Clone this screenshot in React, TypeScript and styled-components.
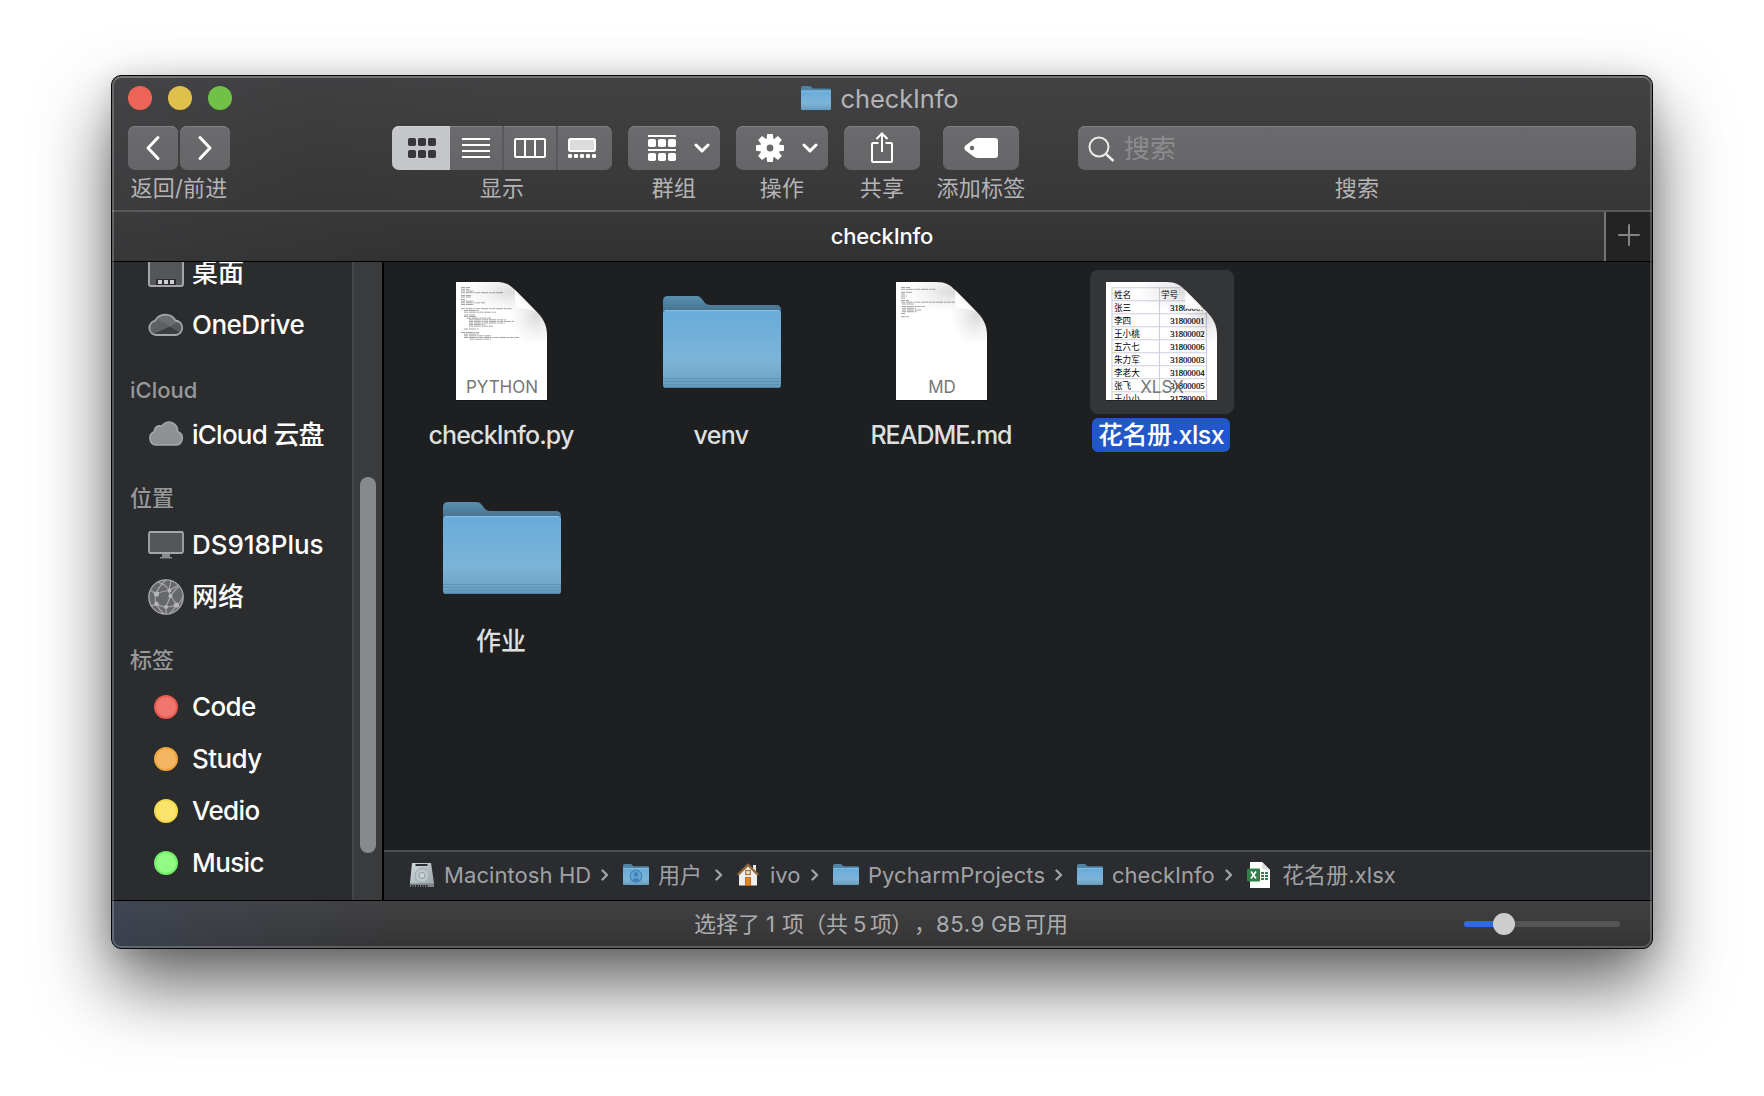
import React from "react";
import styled, { createGlobalStyle } from "styled-components";

const Global = createGlobalStyle`
  * { box-sizing: border-box; }
  body {
    margin: 0;
    background: #fff;
    font-family: Inter, "Noto Sans CJK SC", sans-serif;
    overflow: hidden;
  }
  svg { display: block; flex: none; }
`;

const Desktop = styled.div`
  width: 1764px;
  height: 1096px;
  padding: 75px 111px;
`;

const Window = styled.div`
  position: relative;
  display: flex;
  flex-direction: column;
  width: 1542px;
  height: 874px;
  border: 1px solid #060606;
  border-radius: 10px;
  overflow: hidden;
  background: #1e1f21;
  &::after {
    content: "";
    position: absolute;
    inset: 0;
    border: 2px solid rgba(255, 255, 255, 0.2);
    border-top-color: rgba(255, 255, 255, 0.28);
    border-radius: 9px;
    pointer-events: none;
  }
`;

const Shadow = styled.div`
  width: 1542px;
  height: 874px;
  border-radius: 10px;
  box-shadow: 0 36px 72px rgba(0, 0, 0, 0.61), 0 4px 26px rgba(0, 0, 0, 0.13);
`;

const Header = styled.header`
  height: 136px;
  border-bottom: 2px solid #59595b;
  background:
    linear-gradient(90deg, rgba(70, 72, 74, 0.3), rgba(40, 42, 44, 0.08) 200px, rgba(0, 0, 0, 0) 420px),
    linear-gradient(#424244, #373738);
`;

const TitleRow = styled.div`
  display: flex;
  align-items: center;
  justify-content: center;
  gap: 9px;
  height: 50px;
  padding: 0 4px 6px 0;
`;

const Fit = styled.span<{ $size: number; $ls?: number; $weight?: number; $color?: string }>`
  font-size: ${(p) => p.$size}px;
  letter-spacing: ${(p) => p.$ls ?? 0}px;
  font-weight: ${(p) => p.$weight ?? 400};
  color: ${(p) => p.$color ?? "inherit"};
  line-height: 1.2;
  white-space: nowrap;
`;

const TitleText = styled(Fit)`
  padding-top: 2px;
`;

const Lights = styled.div`
  position: absolute;
  left: 16px;
  top: 10px;
  display: flex;
  gap: 16px;
`;

const Light = styled.i<{ $c: string }>`
  width: 24px;
  height: 24px;
  border-radius: 50%;
  background: ${(p) => p.$c};
`;

const Toolbar = styled.div`
  display: flex;
  padding-left: 16px;
`;

const Tool = styled.div<{ $w: number; $ml?: number }>`
  display: flex;
  flex-direction: column;
  align-items: center;
  width: ${(p) => p.$w}px;
  margin-left: ${(p) => p.$ml ?? 16}px;
`;

const ToolLabel = styled.span`
  height: 36px;
  line-height: 36px;
  font-size: 22px;
  letter-spacing: 0.2px;
  color: #b4b4b6;
  white-space: nowrap;
`;

const Group = styled.div<{ $gap?: number }>`
  display: flex;
  gap: ${(p) => p.$gap ?? 0}px;
  width: 100%;
`;

const Button = styled.div<{ $r?: string; $on?: boolean; $w?: number; $sep?: boolean; $pad?: string }>`
  display: flex;
  align-items: center;
  justify-content: center;
  flex: ${(p) => (p.$w ? "none" : "1")};
  width: ${(p) => (p.$w ? p.$w + "px" : "auto")};
  height: 44px;
  padding: ${(p) => p.$pad ?? "0"};
  border-radius: ${(p) => p.$r ?? "7px"};
  background: ${(p) => (p.$on ? "#c5c6c8" : "linear-gradient(#6b6b6d, #656567)")};
  box-shadow: inset 0 1px 0 ${(p) => (p.$on ? "#d2d2d4" : "#828284")};
  border-right: ${(p) => (p.$sep ? "2px solid #59595b" : "0")};
`;

const MenuButton = styled(Button)`
  justify-content: space-between;
  padding: 0 10px 0 20px;
`;

const Search = styled(Button)`
  justify-content: flex-start;
  padding: 1px 0 0 9px;
  gap: 9px;
`;

const TabBar = styled.div`
  display: flex;
  height: 50px;
  border-bottom: 1px solid #000;
  background: linear-gradient(90deg, rgba(66, 68, 70, 0.3), transparent 300px), linear-gradient(#373738, #323233);
`;

const Tab = styled.div`
  flex: 1;
  display: flex;
  align-items: center;
  justify-content: center;
  padding: 0 0 1px 48px;
`;

const AddTab = styled.div`
  display: flex;
  align-items: center;
  width: 48px;
  padding: 0 0 3px 12px;
  border-left: 2px solid #757577;
  background: #232324;
`;

const Body = styled.div`
  display: flex;
  height: 638px;
`;

const Sidebar = styled.nav`
  width: 240px;
  height: 638px;
  overflow: hidden;
  background: #2b2c2e;
`;

const SideList = styled.div`
  margin-top: -15px;
`;

const SideHead = styled.div<{ $top?: number }>`
  height: 58px;
  padding: ${(p) => p.$top ?? 20}px 0 0 18px;
  line-height: 34px;
  font-size: 22px;
  font-weight: 500;
  color: #97989a;
`;

const SideRow = styled.div`
  display: flex;
  align-items: center;
  height: 52px;
  padding-left: 36px;
  gap: 8px;
  color: #fff;
`;

const IconSlot = styled.div<{ $lift?: number }>`
  display: flex;
  align-items: center;
  justify-content: center;
  width: 36px;
  padding-bottom: ${(p) => p.$lift ?? 0}px;
`;

const TagDot = styled.i<{ $fill: string; $ring: string }>`
  width: 24px;
  height: 24px;
  border-radius: 50%;
  background: ${(p) => p.$fill};
  border: 2px solid ${(p) => p.$ring};
`;

const ScrollTrack = styled.div`
  width: 32px;
  height: 638px;
  padding: 215px 0 0 6px;
  border-left: 2px solid #454648;
  border-right: 2px solid #000;
  background: #3a3b3d;
`;

const ScrollThumb = styled.div`
  width: 16px;
  height: 376px;
  border-radius: 8px;
  background: #88898b;
`;

const Main = styled.main`
  flex: 1;
  display: flex;
  flex-direction: column;
`;

const Files = styled.div`
  flex: 1;
  display: grid;
  grid-template-columns: repeat(4, 220px);
  grid-auto-rows: 206px;
  padding: 8px 0 0 8px;
`;

const File = styled.div`
  display: flex;
  flex-direction: column;
  align-items: center;
  gap: 4px;
  color: #dedfdf;
`;

const Thumb = styled.div<{ $on?: boolean; $folder?: boolean }>`
  display: flex;
  align-items: center;
  justify-content: center;
  width: 144px;
  height: 144px;
  border-radius: 8px;
  background: ${(p) => (p.$on ? "#343537" : "transparent")};
  padding: ${(p) => (p.$folder ? "0" : "0 1px 2px 0")};
`;

const Name = styled.div<{ $on?: boolean }>`
  display: flex;
  align-items: center;
  height: 34px;
  padding: 0 6px;
  margin-right: 2px;
  border-radius: 6px;
  background: ${(p) => (p.$on ? "#2157c9" : "transparent")};
  color: ${(p) => (p.$on ? "#fff" : "inherit")};
`;

const PathBar = styled.div`
  display: flex;
  align-items: center;
  height: 50px;
  padding: 0 0 2px 25px;
  border-top: 2px solid #4a4b4d;
  background: #2b2c30;
  color: #a1a2a4;
`;

const Crumb = styled.div<{ $w: number; $gap: number }>`
  display: flex;
  align-items: center;
  gap: ${(p) => p.$gap}px;
  width: ${(p) => p.$w}px;
`;

const CrumbArrow = styled.div`
  flex: 1;
  display: flex;
  justify-content: flex-end;
  padding-right: 14px;
`;

const StatusBar = styled.footer`
  display: flex;
  align-items: center;
  height: 48px;
  border-top: 1px solid #000;
  padding: 0 32px 2px 582px;
  justify-content: space-between;
  background:
    linear-gradient(90deg, rgba(62, 74, 96, 0.55), rgba(66, 74, 90, 0.35) 90px, rgba(66, 68, 74, 0) 290px),
    linear-gradient(#414143, #343435);
  color: #abacae;
`;

const StatusText = styled.div`
  display: flex;
  font-size: 22px;
  line-height: 30px;
  white-space: pre;
`;

const Piece = styled.span<{ $w: number; $ls?: number }>`
  width: ${(p) => p.$w}px;
  letter-spacing: ${(p) => p.$ls ?? 0}px;
`;

const Track = styled.div`
  display: flex;
  align-items: center;
  width: 156px;
  height: 6px;
  border-radius: 3px;
  background: #555557;
`;

const TrackFill = styled.div`
  width: 32px;
  height: 6px;
  border-radius: 3px 0 0 3px;
  background: #2f6ae0;
`;

const Knob = styled.div`
  width: 22px;
  height: 22px;
  margin-left: -3px;
  border-radius: 50%;
  background: #cdcdcd;
`;

const Line = ({ d, w, h, sw = 3, color = "#fff" }: { d: string; w: number; h: number; sw?: number; color?: string }) => (
  <svg width={w} height={h} viewBox={`0 0 ${w} ${h}`} fill="none" stroke={color} strokeWidth={sw} strokeLinecap="round" strokeLinejoin="round">
    <path d={d} />
  </svg>
);

const Chevron = () => <Line w={16} h={10} d="M2 2L8 8L14 2" />;

const Defs = styled.svg`
  position: absolute;
`;

const SharedPaints = () => (
  <Defs width="0" height="0">
    <defs>
      <linearGradient id="front" x1="0" y1="0" x2="0" y2="1">
        <stop offset="0" stopColor="#68abd9" />
        <stop offset="0.65" stopColor="#7cb4d8" />
        <stop offset="0.84" stopColor="#73a8ca" />
        <stop offset="1" stopColor="#659bbd" />
      </linearGradient>
      <linearGradient id="back" x1="0" y1="0" x2="0" y2="1">
        <stop offset="0" stopColor="#5a8fb0" />
        <stop offset="0.5" stopColor="#47738f" />
      </linearGradient>
      <linearGradient id="fold" x1="0" y1="1" x2="0.7" y2="0.3">
        <stop offset="0" stopColor="#fff" />
        <stop offset="0.6" stopColor="#fbfbfb" />
        <stop offset="1" stopColor="#dcdcdc" />
      </linearGradient>
      <radialGradient id="curl" cx="0.5" cy="0.5" r="0.5">
        <stop offset="0" stopColor="#000" stopOpacity="0.2" />
        <stop offset="0.5" stopColor="#000" stopOpacity="0.08" />
        <stop offset="1" stopColor="#000" stopOpacity="0" />
      </radialGradient>
      <linearGradient id="metal" x1="0" y1="0" x2="1" y2="1">
        <stop offset="0" stopColor="#d2dadd" />
        <stop offset="1" stopColor="#98a2a6" />
      </linearGradient>
    </defs>
  </Defs>
);

const BigFolder = () => (
  <svg width="118" height="94" viewBox="0 0 118 94">
    <path d="M0 6Q0 1 5 1H34Q37 1 39 4L42 8Q44 10 47 10H113Q118 10 118 15V30H0Z" fill="url(#back)" />
    <path d="M0 18Q0 15 4 15H114Q118 15 118 18V90Q118 93 115 93H3Q0 93 0 90Z" fill="url(#front)" />
    <path d="M2 15.7H116" stroke="#8cc4e8" strokeWidth="1" />
    <path d="M0 83.5H118M0 86.5H118M0 89.5H118" stroke="#4f86a8" strokeOpacity="0.55" strokeWidth="1" />
    <path d="M1 92.4H117" stroke="#4b7f9f" strokeWidth="1" />
  </svg>
);

const SmallFolder = ({ w = 26, h = 21, user }: { w?: number; h?: number; user?: boolean }) => (
  <svg width={w} height={h} viewBox="0 0 30 24" preserveAspectRatio="none">
    <path d="M0 2Q0 0 2 0H8.5Q10 0 11 1.5L12 2.5H28.5Q30 2.5 30 4V8H0Z" fill="#4f84a5" />
    <path d="M0 5Q0 4.5 1 4.5H29Q30 4.5 30 5V22.5Q30 24 29 24H1Q0 24 0 22.5Z" fill="url(#front)" />
    <path d="M0 5H30" stroke="#8cc4e8" strokeWidth="0.8" />
    {user && (
      <g>
        <circle cx="15" cy="14" r="6.8" fill="#62a4d2" stroke="#4080b4" strokeWidth="1.2" />
        <circle cx="15" cy="12" r="2.5" fill="#4080b4" />
        <path d="M10.5 18.5Q15 13.5 19.5 18.5Q15 22 10.5 18.5Z" fill="#4080b4" />
      </g>
    )}
  </svg>
);

type Mark = [number, number, number];
const pyMarks: Mark[] = [
  [5, 5.5, 9], [5, 7.3, 8], [5, 9, 13], [5, 10.7, 42], [5, 13.5, 10], [5, 15, 10], [5, 17.5, 4], [5, 19.2, 13], [5, 20.8, 24], [5, 22.5, 13],
  [5, 26.7, 51], [8, 28.5, 15], [8, 30.2, 32], [8, 33, 11], [8, 34.6, 12], [11, 36.2, 24], [13, 37.8, 37], [13, 39.4, 45], [13, 41, 36], [13, 42.6, 16], [13, 44.2, 24],
  [8, 47, 15], [5, 50.5, 18], [8, 52.1, 15], [8, 53.8, 27], [8, 55.5, 55], [14, 57.2, 21],
];
const mdMarks: Mark[] = [
  [5, 5.5, 9], [5, 7.3, 35], [5, 10.3, 11], [5, 12, 5], [5, 14, 6], [5, 16, 5], [5, 18.5, 8], [5, 20.2, 54], [6, 22, 12], [6, 24.5, 23],
  [6, 26.3, 14], [6, 28, 20], [6, 29.7, 15], [5, 31.5, 4], [5, 34.7, 8],
];
const roster: [string, string][] = [
  ["张三", "31800000"], ["李四", "31800001"], ["王小桃", "31800002"], ["五六七", "31800006"], ["朱力军", "31800003"],
  ["李老大", "31800004"], ["张飞", "31800005"], ["王小小", "31780000"],
];

const Doc = ({ w, id, label, marks }: { w: number; id: string; label: string; marks?: Mark[] }) => {
  const r = w - 91;
  return (
    <svg width={w} height="118" viewBox={`0 0 ${w} 118`} overflow="visible">
      <defs>
        <clipPath id={id}>
          <path d={`M0 0H${r + 40}C${r + 50} 0 ${r + 54} 3 ${r + 60} 9L${r + 78} 27C${r + 87} 36 ${w} 42 ${w} 54V118H0Z`} />
        </clipPath>
      </defs>
      <rect x="0" y="117" width={w} height="2" fill="#000" opacity="0.35" />
      <g clipPath={`url(#${id})`}>
        <rect width={w} height="118" fill="#fff" />
        {marks && (
          <g stroke="#9a9a9a" strokeWidth="0.9" strokeDasharray="4 0.8 7 0.8 2 0.6">
            {marks.map(([x, y, len], i) => <path key={i} d={`M${x} ${y}h${len}`} />)}
          </g>
        )}
        {!marks && (
          <g>
            <g stroke="#cfcfe0" strokeWidth="1.1" fill="none">
              {[...Array(9)].map((_, i) => <path key={i} d={`M5.5 ${5.7 + i * 13}H100.5`} />)}
              <path d="M6 5.5V118M53.5 5.5V118M100.5 5.5V118" />
            </g>
            <g fontFamily='"Liberation Serif", "Noto Sans CJK SC", serif' fontSize="8.6" fill="#000">
              <text x="8" y="16">姓名</text>
              <text x="55" y="16">学号</text>
              {roster.map(([n, no], i) => (
                <g key={no}>
                  <text x="8" y={29 + i * 13}>{n}</text>
                  <text x="98.5" y={29 + i * 13} textAnchor="end" stroke="#000" strokeWidth="0.2">{no}</text>
                </g>
              ))}
            </g>
          </g>
        )}
        <ellipse cx={r + 56} cy="10" rx="46" ry="20" fill="url(#curl)" opacity="0.7" />
        <ellipse cx={r + 80} cy="34" rx="26" ry="30" fill="url(#curl)" opacity="0.7" />
        <path d={`M${r + 59} 6V24Q${r + 59} 27 ${r + 62} 27Q${r + 72} 26 ${r + 80} 30Z`} fill="url(#fold)" />
      </g>
      <text x={w / 2 + 0.5} y="111" textAnchor="middle" fontFamily="Inter, sans-serif" fontSize="17" fontWeight="400" fill="#777">{label}</text>
    </svg>
  );
};

const Desk = () => (
  <svg width="36" height="28" viewBox="0 0 36 28">
    <rect x="1" y="1" width="34" height="26" rx="2" fill="#555658" stroke="#a5a6a8" strokeWidth="2" />
    <rect x="8" y="20" width="20" height="6" fill="#2b2c2e" />
    <path d="M10 21h4v4h-4zM16 21h4v4h-4zM22 21h4v4h-4z" fill="#cfcfd1" />
  </svg>
);
const OneDrive = () => (
  <svg width="36" height="24" viewBox="0 0 36 24">
    <defs>
      <clipPath id="od"><path d="M8 23A7.2 7.2 0 0 1 7 8.800A11.800 11.800 0 0 1 27.500 8.500A7.300 7.300 0 0 1 28 23Z" /></clipPath>
    </defs>
    <g clipPath="url(#od)">
      <rect width="36" height="24" fill="#6c6d6f" />
      <path d="M0 8L9 7L22 14.500L4 23L0 24Z" fill="#5f6062" />
      <path d="M5 22L22 14.500L36 22V24H5Z" fill="#3c3d3f" />
      <path d="M22 14.500L28 11L36 10V22L32 21Z" fill="#56575a" />
    </g>
    <path d="M8 23A7.2 7.2 0 0 1 7 8.800A11.800 11.800 0 0 1 27.500 8.500A7.300 7.300 0 0 1 28 23Z" fill="none" stroke="#a5a6a8" strokeWidth="1.800" />
  </svg>
);
const ICloud = () => (
  <svg width="36" height="25" viewBox="0 0 36 25">
    <path d="M8 24A7 7 0 0 1 6.500 10.500A4.800 4.800 0 0 1 13.500 5.500A8.600 8.600 0 0 1 29.600 10.500A7 7 0 0 1 28.500 24Z" fill="#8f9092" stroke="#a5a6a8" strokeWidth="1.600" />
  </svg>
);
const Monitor = () => (
  <svg width="36" height="28" viewBox="0 0 36 28">
    <rect x="1" y="1" width="34" height="21" rx="1.500" fill="#555658" stroke="#a5a6a8" strokeWidth="1.800" />
    <path d="M14 23h8v3h2v1.600H12V26h2z" fill="#88898b" />
  </svg>
);
const Globe = () => (
  <svg width="36" height="36" viewBox="0 0 36 36" fill="none" stroke="#a9aaac" strokeWidth="1.100">
    <circle cx="18" cy="18" r="17.200" fill="#67686a" strokeWidth="1.300" />
    <path d="M8 15Q14 12 21 11.500Q27 8 31 6M8 15Q6 20 8.500 25Q13 27.500 18 28Q24 28 28.500 26Q26 21 22.500 17Q21 14 21 11.500Q18 5 10 3.500M8 15Q11 7 18 1M22.500 17Q27 10 31 8M22.500 17Q20 23 18 28V35M8 15L2 11M8.500 25L3 27M8.500 25Q11 31 16 35M28.500 26Q34 22 35 17M28.500 26Q26 31 22 34M21 11.500L23 1.500" />
    <g fill="#b5b6b8" stroke="none">
      <circle cx="8.500" cy="15" r="2.600" /><circle cx="21.500" cy="11.500" r="1.900" /><circle cx="22.500" cy="17" r="2.100" />
      <circle cx="8.500" cy="25" r="2.300" /><circle cx="18" cy="28" r="2" /><circle cx="28.500" cy="26" r="2.600" />
    </g>
  </svg>
);

const Gear = () => (
  <svg width="28" height="28" viewBox="-14 -14 28 28" fill="#fff">
    {[0, 45, 90, 135].map((a) => <path key={a} transform={`rotate(${a})`} d="M-2.800 -14H2.800L3.600 -8V8L2.800 14H-2.800L-3.600 8V-8Z" />)}
    <circle r="9.800" />
    <circle r="3.400" fill="#68686a" />
  </svg>
);

const squares = (y: number) => [0, 10, 20].map((x) => <rect key={x + "-" + y} x={x} y={y} width="8" height="8" rx="1.800" />);

const Drive = () => (
  <svg width="26" height="26" viewBox="0 0 26 26">
    <path d="M3 1H22L25 21V25H1V21Z" fill="url(#metal)" />
    <path d="M1 21.500H25V25H1Z" fill="#7c8487" />
    <path d="M2 24H19" stroke="#222" strokeWidth="2" strokeDasharray="1.500 1" />
    <rect x="6.500" y="2" width="12" height="2" fill="#2c3032" />
    <circle cx="13" cy="13.500" r="7" fill="#bdc6ca" stroke="#a0aaae" />
    <circle cx="13" cy="13.500" r="3" fill="#cdd5d8" stroke="#8f999e" />
  </svg>
);
const House = () => (
  <svg width="22" height="23" viewBox="0 0 22 23">
    <rect x="16" y="2" width="3" height="6" fill="#e8e8e8" />
    <path d="M2 11L11 3L20 11V22.500H2Z" fill="#eeeeec" />
    <path d="M0.800 11.800L11 2L21.200 11.800" fill="none" stroke="#94673a" strokeWidth="2.400" />
    <rect x="8.700" y="7.500" width="4.600" height="4" fill="#f3e3d2" stroke="#a9713c" strokeWidth="1.200" />
    <rect x="8.500" y="14.500" width="5" height="8" fill="#e0862a" stroke="#a85d18" strokeWidth="0.800" />
  </svg>
);
const Excel = () => (
  <svg width="24" height="26" viewBox="0 0 24 26">
    <path d="M3 0H15L23 8V26H3Z" fill="#fff" />
    <path d="M15 0V6Q16 8 23 8Z" fill="#dedede" />
    <path d="M14 10h3v2h-3zM18 10h3v2h-3zM14 13h3v2h-3zM18 13h3v2h-3zM14 16h3v2h-3zM18 16h3v2h-3z" fill="#2f8350" />
    <rect x="0" y="6.500" width="13" height="13" rx="1" fill="#2f8049" />
    <path d="M4 9.500L9 16.500M9 9.500L4 16.500" stroke="#fff" strokeWidth="1.700" />
  </svg>
);

const side = {
  top: [
    { icon: <Desk />, label: "桌面", ls: 0, lift: 0 },
    { icon: <OneDrive />, label: "OneDrive", ls: -0.5, lift: 3 },
  ],
  places: [
    { icon: <Monitor />, label: "DS918Plus", ls: -0.05, lift: 1 },
    { icon: <Globe />, label: "网络", ls: 0, lift: 1 },
  ],
  tags: [
    { label: "Code", fill: "#f0776f", ring: "#ea5a50" },
    { label: "Study", fill: "#f3b764", ring: "#f0a63c" },
    { label: "Vedio", fill: "#fbe46e", ring: "#f2da4c" },
    { label: "Music", fill: "#92fb84", ring: "#70ef68" },
  ],
};

const files = [
  { name: "checkInfo.py", ls: -0.85, art: <Doc w={91} id="py" label="PYTHON" marks={pyMarks} /> },
  { name: "venv", ls: -0.7, folder: true, art: <BigFolder /> },
  { name: "README.md", ls: -1, art: <Doc w={91} id="md" label="MD" marks={mdMarks} /> },
  { name: "花名册.xlsx", ls: -0.5, on: true, art: <Doc w={111} id="xl" label="XLSX" /> },
  { name: "作业", ls: 0, folder: true, art: <BigFolder /> },
];

const crumbs = [
  { icon: <Drive />, label: "Macintosh HD", w: 214, gap: 9, ls: 0.08 },
  { icon: <SmallFolder user />, label: "用户", w: 114, gap: 9, ls: 0 },
  { icon: <House />, label: "ivo", w: 96, gap: 11, ls: 0 },
  { icon: <SmallFolder />, label: "PycharmProjects", w: 244, gap: 9, ls: 0.05 },
  { icon: <SmallFolder />, label: "checkInfo", w: 170, gap: 9, ls: 0 },
  { icon: <Excel />, label: "花名册.xlsx", w: 170, gap: 11, ls: 0.08 },
];

export default function App() {
  return (
    <Desktop>
      <Global />
      <SharedPaints />
      <Shadow>
        <Window>
          <Header>
            <Lights>
              <Light $c="#ed6559" />
              <Light $c="#e0c04c" />
              <Light $c="#71c048" />
            </Lights>
            <TitleRow>
              <SmallFolder w={30} h={24} />
              <TitleText $size={25.5} $ls={-0.1} $color="#b4b4b6">checkInfo</TitleText>
            </TitleRow>
            <Toolbar>
              <Tool $w={102} $ml={0}>
                <Group $gap={2}>
                  <Button><Line w={16} h={26} d="M13 2.500L3 13L13 23.500" /></Button>
                  <Button><Line w={16} h={26} d="M3 2.500L13 13L3 23.500" /></Button>
                </Group>
                <ToolLabel>返回/前进</ToolLabel>
              </Tool>
              <Tool $w={220} $ml={162}>
                <Group>
                  <Button $w={58} $on $r="7px 0 0 7px" $pad="0 0 0 2px">
                    <svg width="28" height="20" fill="#38383a">{squares(0)}{squares(12)}</svg>
                  </Button>
                  <Button $w={54} $r="0" $sep>
                    <svg width="28" height="20" fill="#fff">{[0, 6, 12, 18].map((y) => <rect key={y} y={y} width="28" height="2" />)}</svg>
                  </Button>
                  <Button $w={54} $r="0" $sep>
                    <svg width="32" height="20" fill="none" stroke="#fff" strokeWidth="2">
                      <rect x="1" y="1" width="30" height="18" rx="1" />
                      <path d="M11 1V19M21 1V19" />
                    </svg>
                  </Button>
                  <Button $w={54} $r="0 7px 7px 0" $pad="0 6px 0 0">
                    <svg width="28" height="20" fill="#fff">
                      <rect x="1" y="1" width="26" height="12" rx="1.500" fill="#dcdcde" stroke="#fff" strokeWidth="2" />
                      {[0, 6, 12, 18, 24].map((x) => <rect key={x} x={x} y="16" width="4" height="4" rx="1.200" />)}
                    </svg>
                  </Button>
                </Group>
                <ToolLabel>显示</ToolLabel>
              </Tool>
              <Tool $w={92}>
                <Group>
                  <MenuButton>
                    <svg width="28" height="26" fill="#fff">
                      <rect width="28" height="2" />{squares(4)}
                      <rect y="14" width="28" height="2" />{squares(18)}
                    </svg>
                    <Chevron />
                  </MenuButton>
                </Group>
                <ToolLabel>群组</ToolLabel>
              </Tool>
              <Tool $w={92}>
                <Group>
                  <MenuButton>
                    <Gear />
                    <Chevron />
                  </MenuButton>
                </Group>
                <ToolLabel>操作</ToolLabel>
              </Tool>
              <Tool $w={76}>
                <Group>
                  <Button $pad="0 0 2px">
                    <svg width="24" height="34" viewBox="0 0 24 34" fill="none" stroke="#fff" strokeWidth="2">
                      <path d="M8.500 13H3Q2 13 2 14V31Q2 32 3 32H21Q22 32 22 31V14Q22 13 21 13H15.500M12 22V3.500M6.500 9L12 3.500L17.500 9" />
                    </svg>
                  </Button>
                </Group>
                <ToolLabel>共享</ToolLabel>
              </Tool>
              <Tool $w={76} $ml={23}>
                <Group>
                  <Button>
                    <svg width="34" height="20" viewBox="0 0 34 20">
                      <path d="M10 1.200Q12 0 14 0H31Q34 0 34 3V17Q34 20 31 20H14Q12 20 10 18.800L1.500 12.500Q-0.700 10 1.500 7.500Z" fill="#fff" />
                      <circle cx="8" cy="10" r="2.200" fill="#68686a" />
                    </svg>
                  </Button>
                </Group>
                <ToolLabel>添加标签</ToolLabel>
              </Tool>
              <Tool $w={558} $ml={59}>
                <Group>
                  <Search>
                    <svg width="28" height="28" viewBox="0 0 28 28" fill="none" stroke="#ececec" strokeWidth="2">
                      <circle cx="12" cy="12" r="9.500" />
                      <path d="M18.800 18.800L26.500 26" strokeWidth="2.500" />
                    </svg>
                    <Fit $size={26} $color="#8c8c8e">搜索</Fit>
                  </Search>
                </Group>
                <ToolLabel>搜索</ToolLabel>
              </Tool>
            </Toolbar>
          </Header>
          <TabBar>
            <Tab><Fit $size={22} $ls={-0.2} $weight={500} $color="#fff">checkInfo</Fit></Tab>
            <AddTab><Line w={22} h={22} sw={2} color="#848486" d="M11 1V21M1 11H21" /></AddTab>
          </TabBar>
          <Body>
            <Sidebar>
              <SideList>
                {side.top.map((r) => (
                  <SideRow key={r.label}><IconSlot $lift={r.lift}>{r.icon}</IconSlot><Fit $size={26} $weight={500} $ls={r.ls}>{r.label}</Fit></SideRow>
                ))}
                <SideHead $top={22}>iCloud</SideHead>
                <SideRow><IconSlot $lift={3}><ICloud /></IconSlot><Fit $size={26} $weight={500} $ls={-0.75}>iCloud 云盘</Fit></SideRow>
                <SideHead>位置</SideHead>
                {side.places.map((r) => (
                  <SideRow key={r.label}><IconSlot $lift={r.lift}>{r.icon}</IconSlot><Fit $size={26} $weight={500} $ls={r.ls}>{r.label}</Fit></SideRow>
                ))}
                <SideHead>标签</SideHead>
                {side.tags.map((r) => (
                  <SideRow key={r.label}>
                    <IconSlot $lift={1}><TagDot $fill={r.fill} $ring={r.ring} /></IconSlot>
                    <Fit $size={26} $weight={500} $ls={-0.6}>{r.label}</Fit>
                  </SideRow>
                ))}
              </SideList>
            </Sidebar>
            <ScrollTrack><ScrollThumb /></ScrollTrack>
            <Main>
              <Files>
                {files.map((f) => (
                  <File key={f.name}>
                    <Thumb $on={f.on} $folder={f.folder}>{f.art}</Thumb>
                    <Name $on={f.on}><Fit $size={25} $ls={f.ls} $weight={f.on ? 500 : 450}>{f.name}</Fit></Name>
                  </File>
                ))}
              </Files>
              <PathBar>
                {crumbs.map((c, i) => (
                  <Crumb key={c.label} $w={c.w} $gap={c.gap}>
                    {c.icon}
                    <Fit $size={22} $ls={c.ls}>{c.label}</Fit>
                    {i < crumbs.length - 1 && <CrumbArrow><Line w={8} h={12} sw={2.4} color="#a1a2a4" d="M1.500 1.500L6 6L1.500 10.500" /></CrumbArrow>}
                  </Crumb>
                ))}
              </PathBar>
            </Main>
          </Body>
          <StatusBar>
            <StatusText>
              <Piece $w={72}>选择了</Piece>
              <Piece $w={16}>1</Piece>
              <Piece $w={22}>项</Piece>
              <Piece $w={49}>（共</Piece>
              <Piece $w={17}>5</Piece>
              <Piece $w={21}>项</Piece>
              <Piece $w={23}>）</Piece>
              <Piece $w={22}>，</Piece>
              <Piece $w={55} $ls={0.7}>85.9</Piece>
              <Piece $w={33} $ls={-0.5}>GB</Piece>
              <Piece $w={46}>可用</Piece>
            </StatusText>
            <Track><TrackFill /><Knob /></Track>
          </StatusBar>
        </Window>
      </Shadow>
    </Desktop>
  );
}
